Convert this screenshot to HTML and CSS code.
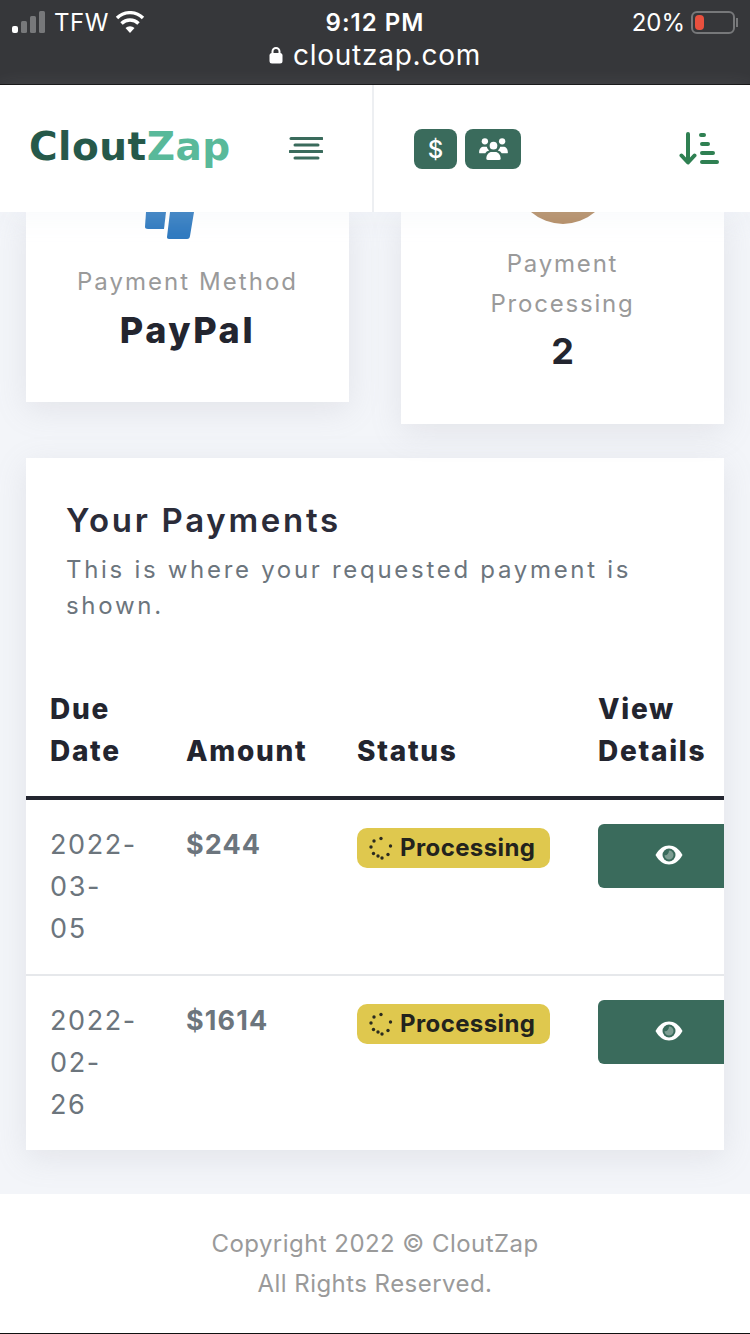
FILE: index.html
```html
<!DOCTYPE html>
<html lang="en">
<head>
<meta charset="utf-8">
<title>CloutZap</title>
<link rel="stylesheet" href="styles.css">
</head>
<body>
<div class="phone">
  <div class="statusbar">
    <div class="status-row">
      <div class="status-left">
        <svg class="signal" viewBox="0 0 34 22" width="34" height="22"><rect x="0" y="15" width="6" height="7" rx="2" fill="#fff"/><rect x="9" y="10" width="6" height="12" rx="1.5" fill="#77787a"/><rect x="18" y="5" width="6" height="17" rx="1.5" fill="#77787a"/><rect x="27" y="0" width="6" height="22" rx="1.5" fill="#77787a"/></svg>
        <span>TFW</span>
        <svg class="wifi" viewBox="0 0 30 22" width="30" height="22"><path d="M15 22l-4.500-5a6.500 6.500 0 0 1 9 0z" fill="#fff"/><path d="M6.500 12.500a12 12 0 0 1 17 0M2 7a18.500 18.500 0 0 1 26 0" fill="none" stroke="#fff" stroke-width="3.400"/></svg>
      </div>
      <div class="status-time">9:12 PM</div>
      <div class="status-right">
        <span>20%</span>
        <div class="battery"><div class="battery-level"></div></div>
        <div class="battery-tip"></div>
      </div>
    </div>
    <div class="url-row">
      <svg viewBox="0 0 14 18" width="14" height="18"><path d="M3.500 8V5.500a3.500 3.500 0 0 1 7 0V8" fill="none" stroke="#fff" stroke-width="2"/><rect x="0.500" y="7" width="13" height="10.500" rx="2.500" fill="#fff"/></svg>
      <span>cloutzap.com</span>
    </div>
  </div>

  <header class="topnav">
    <div class="brand-side">
      <div class="logo"><span class="logo-dark">Clout</span><span class="logo-light">Zap</span></div>
      <svg class="menu-icon" viewBox="0 0 34 24" width="34" height="24"><g stroke="#3a6b5c" stroke-width="3" stroke-linecap="round"><path d="M2 2.500h31"/><path d="M6 9h23" /><path d="M1 15.500h32"/><path d="M6 22h23"/></g></svg>
    </div>
    <div class="tools-side">
      <div class="tool-buttons">
        <div class="tool-btn tool-dollar">$</div>
        <div class="tool-btn tool-users">
          <svg viewBox="0 0 30 24" width="29" height="23" fill="#fff"><circle cx="6" cy="3.500" r="3.300"/><circle cx="24" cy="3.500" r="3.300"/><circle cx="15" cy="8" r="4"/><path d="M0 15c0-4 2-6 5-6h3c.5 2 1.500 3 2.500 4-2 .5-3.500 1.500-4 3H1.500C.5 16 0 15.800 0 15zM30 15c0-4-2-6-5-6h-3c-.5 2-1.500 3-2.500 4 2 .5 3.500 1.500 4 3h5c1 0 1.500-.2 1.500-1zM7.500 21.500c0-4.500 3-7 5.500-7h4c2.500 0 5.500 2.500 5.500 7 0 1-.5 1.500-1.500 1.500H9c-1 0-1.500-.5-1.500-1.500z"/></svg>
        </div>
      </div>
      <svg class="sort-icon" viewBox="0 0 42 34" width="42" height="34"><g stroke="#2f8052" stroke-linecap="round" fill="none"><path d="M9 2v28M2.500 23.500L9 30.500l6.500-7" stroke-width="4" stroke-linejoin="round"/><path d="M22 3h3M23 12h6M23 21h11M23 30h15" stroke-width="4"/></g></svg>
    </div>
  </header>

  <main class="content">
    <div class="stat-row">
      <section class="card card-left">
        <svg class="paypal" viewBox="0 0 50 28" width="50" height="28"><path d="M1 0h20l-2 17H3c-2 0-3-1-3-2z" fill="#2e79bf"/><path d="M25 0h24l-4 24c-.3 2-1 3-3 3H24c-1.500 0-2-1-2-2z" fill="#2e79bf"/></svg>
        <div class="card-label">Payment Method</div>
        <div class="card-value-lg">PayPal</div>
      </section>
      <section class="card card-right">
        <svg class="avatar" viewBox="0 0 64 12" width="64" height="12"><path d="M0 0h64A49 49 0 0 1 0 0z" fill="#b28a62"/></svg>
        <div class="card-label card-label-wrap">Payment<br>Processing</div>
        <div class="card-value">2</div>
      </section>
    </div>

    <section class="panel">
      <div class="panel-head">
        <h2>Your Payments</h2>
        <p>This is where your requested payment is shown.</p>
      </div>
      <div class="table-clip">
        <table>
          <thead>
            <tr><th class="c1">Due<br>Date</th><th class="c2">Amount</th><th class="c3">Status</th><th class="c4">View<br>Details</th></tr>
          </thead>
          <tbody>
            <tr>
              <td class="c1 date">2022-<br>03-<br>05</td>
              <td class="c2 amount">$244</td>
              <td class="c3"><span class="badge"><svg viewBox="0 0 24 24" width="24" height="24" fill="#2a2a1f"><circle cx="12" cy="2.500" r="1.700"/><circle cx="5" cy="5" r="1.700"/><circle cx="2" cy="11" r="1.700"/><circle cx="4.500" cy="17.500" r="1.700"/><circle cx="9" cy="20" r="1.700"/><circle cx="13" cy="22" r="1.700"/><circle cx="19" cy="18.500" r="1.700"/><circle cx="21.500" cy="10" r="1.700"/></svg><span class="badge-text">Processing</span></span></td>
              <td class="c4"><div class="view-btn"><svg viewBox="0 0 28 20" width="28" height="20"><path d="M0.500 10C4 3.500 9 0.500 14 0.500S24 3.500 27.500 10C24 16.500 19 19.500 14 19.500S4 16.500 0.500 10z" fill="#fff"/><circle cx="14" cy="10" r="6.500" fill="#3a6b5c"/><path d="M14 5.500a4.500 4.500 0 0 1 4.500 4.500 4.500 4.500 0 0 1-4.500 4.500 4.500 4.500 0 0 1-4.500-4.500c1.500 1 4.500-1 4.500-4.500z" fill="#7d9d92"/></svg></div></td>
            </tr>
            <tr class="row-last">
              <td class="c1 date">2022-<br>02-<br>26</td>
              <td class="c2 amount">$1614</td>
              <td class="c3"><span class="badge"><svg viewBox="0 0 24 24" width="24" height="24" fill="#2a2a1f"><circle cx="12" cy="2.500" r="1.700"/><circle cx="5" cy="5" r="1.700"/><circle cx="2" cy="11" r="1.700"/><circle cx="4.500" cy="17.500" r="1.700"/><circle cx="9" cy="20" r="1.700"/><circle cx="13" cy="22" r="1.700"/><circle cx="19" cy="18.500" r="1.700"/><circle cx="21.500" cy="10" r="1.700"/></svg><span class="badge-text">Processing</span></span></td>
              <td class="c4"><div class="view-btn"><svg viewBox="0 0 28 20" width="28" height="20"><path d="M0.500 10C4 3.500 9 0.500 14 0.500S24 3.500 27.500 10C24 16.500 19 19.500 14 19.500S4 16.500 0.500 10z" fill="#fff"/><circle cx="14" cy="10" r="6.500" fill="#3a6b5c"/><path d="M14 5.500a4.500 4.500 0 0 1 4.500 4.500 4.500 4.500 0 0 1-4.500 4.500 4.500 4.500 0 0 1-4.500-4.500c1.500 1 4.500-1 4.500-4.500z" fill="#7d9d92"/></svg></div></td>
            </tr>
          </tbody>
        </table>
      </div>
    </section>
  </main>

  <footer class="footer">
    <div>Copyright 2022 © CloutZap</div>
    <div>All Rights Reserved.</div>
  </footer>
</div>
</body>
</html>
```

FILE: styles.css
```css
* { box-sizing: border-box; }
html, body { margin: 0; padding: 0; background: #f3f5f9; }
body { font-family: "Inter", "Liberation Sans", sans-serif; }
.phone { width: 750px; height: 1334px; display: flex; flex-direction: column; overflow: hidden; }

.statusbar { height: 85px; background: #36373a; border-bottom: 1px solid #111; color: #fff; flex: none; padding-top: 8px; }
.status-row { display: grid; grid-template-columns: 1fr auto 1fr; align-items: center; height: 26px; padding: 0 12px; }
.status-left { display: flex; align-items: center; gap: 8px; font-size: 24px; letter-spacing: .5px; }
.status-left .signal { margin-top: -2px; }
.status-left .wifi { margin: -2px 0 0 -2px; }
.status-time { font-size: 24px; font-weight: 600; letter-spacing: 1px; }
.status-right { display: flex; align-items: center; justify-content: flex-end; font-size: 24px; gap: 6px; }
.battery { width: 44px; height: 23px; border: 2px solid #77787a; border-radius: 6px; padding: 2px; }
.battery-level { width: 9px; height: 100%; background: #e9503e; border-radius: 4px; }
.battery-tip { width: 2px; height: 9px; background: #77787a; margin-left: -5px; }
.url-row { display: flex; align-items: center; justify-content: center; gap: 10px; font-size: 28px; letter-spacing: .75px; height: 42px; }

.topnav { height: 127px; background: #fff; display: flex; flex: none; position: relative; z-index: 2; box-shadow: 0 8px 24px rgba(226,232,240,.2); }
.brand-side { width: 374px; border-right: 2px solid #edeff2; display: flex; align-items: center; padding-left: 29px; }
.logo { font-family: "DejaVu Sans", sans-serif; font-size: 39px; font-weight: 700; letter-spacing: .5px; width: 202px; line-height: 1; margin-top: -4px; white-space: nowrap; }
.logo-dark { color: #26594a; }
.logo-light { color: #59b99a; }
.menu-icon { margin-left: 58px; margin-top: -1px; }
.tools-side { flex: 1; display: flex; align-items: center; justify-content: space-between; padding: 0 29px 0 40px; }
.tool-buttons { display: flex; gap: 8px; margin-top: 1px; }
.tool-btn { height: 40px; border-radius: 8px; background: #3a6b5c; color: #fff; display: flex; align-items: center; justify-content: center; }
.tool-dollar { width: 43px; font-size: 24px; font-weight: 500; }
.tool-users { width: 56px; }
.sort-icon { margin-top: 0; }

.content { flex: 1; padding: 0 26px; min-height: 0; }
.stat-row { display: flex; justify-content: space-between; align-items: flex-start; }
.card { width: 323px; background: #fff; box-shadow: 0 8px 30px rgba(140,145,155,.16); display: flex; flex-direction: column; align-items: center; text-align: center; }
.card-left { height: 190px; }
.card-right { height: 212px; }
.paypal { align-self: flex-start; margin: 0 0 0 119px; }
.card-label { font-size: 24px; color: #9a9a9a; letter-spacing: 1.8px; line-height: 40px; }
.card-left .card-label { margin-top: 22px; letter-spacing: 2.05px; }
.card-value-lg { font-size: 36px; font-weight: 800; color: #23252f; letter-spacing: 2.6px; line-height: 50px; margin-top: 3px; }
.avatar { display: block; }
.card-label-wrap { margin-top: 20px; }
.card-value { font-size: 36px; font-weight: 700; color: #23252f; line-height: 46px; margin-top: 4px; }

.panel { background: #fff; margin-top: 34px; height: 692px; box-shadow: 0 8px 30px rgba(140,145,155,.16); overflow: hidden; }
.panel-head { padding: 40px 40px 0; height: 230px; }
.panel-head h2 { margin: 0; font-size: 33px; font-weight: 600; letter-spacing: 2.7px; color: #2b2c39; line-height: 44px; }
.panel-head p { margin: 10px 0 0; font-size: 24px; color: #6c757d; letter-spacing: 2.7px; line-height: 36px; }
.table-clip { overflow: hidden; }
table { border-collapse: collapse; table-layout: fixed; width: 746px; }
th { font-size: 28px; font-weight: 800; color: #23252f; text-align: left; vertical-align: bottom; line-height: 42px; letter-spacing: 1.7px; padding: 0 0 24px 24px; border-bottom: 4px solid #23252f; }
td { vertical-align: top; padding: 24px 0 24px 24px; border-bottom: 2px solid #e6e8eb; }
.row-last td { border-bottom: 0; }
.c1 { width: 136px; }
.c2 { width: 171px; }
.c3 { width: 241px; }
.date { font-size: 27px; color: #6c757d; line-height: 42px; letter-spacing: 1.6px; padding-top: 24px; padding-left: 24px; }
.amount { font-size: 27px; font-weight: 700; color: #6c757d; line-height: 42px; letter-spacing: 1.1px; padding-top: 24px; }
.c1.date { padding-bottom: 24px; }
.badge { display: inline-flex; align-items: center; gap: 7px; height: 40px; width: 193px; padding-left: 12px; background: #dfc84e; border-radius: 10px; font-size: 24px; font-weight: 700; color: #23231d; letter-spacing: .4px; margin-top: 4px; white-space: nowrap; }
.badge-text { margin-top: -2px; }
.view-btn { width: 142px; height: 64px; background: #3a6b5c; border-radius: 6px 0 0 6px; display: flex; align-items: center; justify-content: center; padding-bottom: 2px; }

.footer { height: 140px; margin-top: 44px; background: #fff; flex: none; border-bottom: 1px solid #111; text-align: center; font-size: 24px; font-weight: 400; letter-spacing: .45px; color: #9a9a9a; line-height: 40px; padding-top: 30px; }
```
